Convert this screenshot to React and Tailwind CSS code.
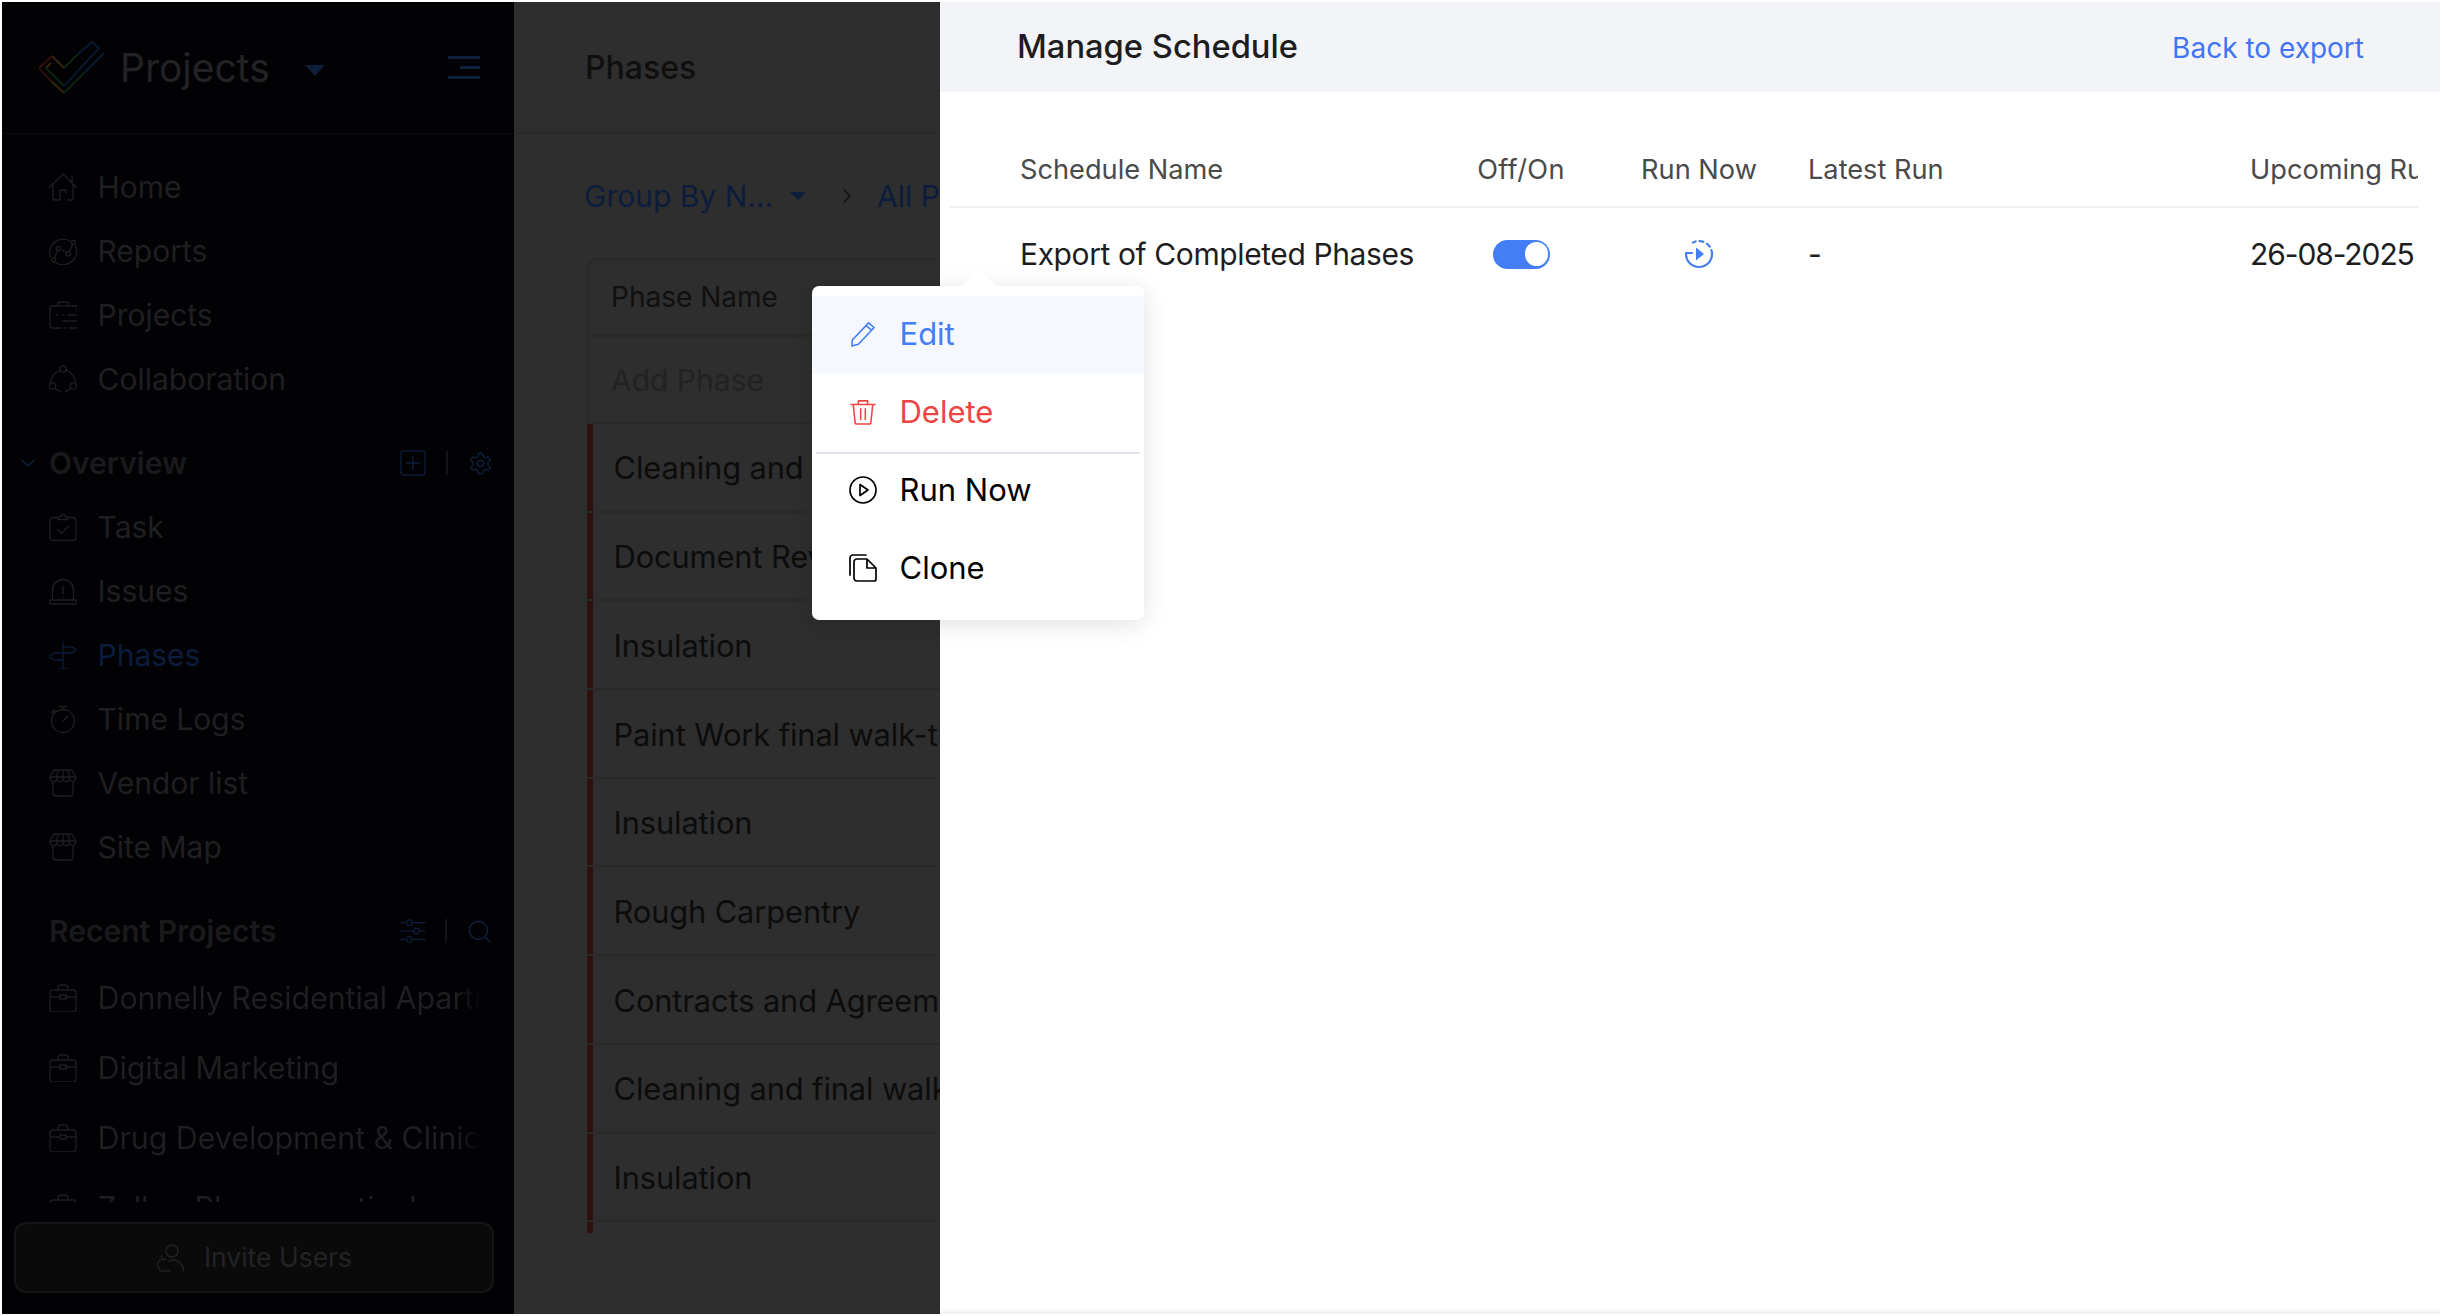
import React from 'react';
import { ChevronDown, ChevronRight, Settings, Search } from 'lucide-react';

const Ico = ({ children, className = 'w-[28px] h-[28px]', sw = 1.3 }) => (
  <svg viewBox="0 0 28 28" fill="none" stroke="currentColor" strokeWidth={sw} strokeLinecap="round" strokeLinejoin="round" className={`shrink-0 ${className}`}>
    {children}
  </svg>
);

const HomeIcon = () => (
  <Ico>
    <path d="M.5 14.5 14 1l13.5 13.5M23 10V3.5M4 11.5v13.5a2 2 0 0 0 2 2h5V17h6v3M24 11.5v13.5a2 2 0 0 1-2 2h-3.5" />
  </Ico>
);
const ReportsIcon = () => (
  <Ico>
    <path d="M22 4.5A13.5 13.5 0 0 0 1.5 20M26.5 9A13.5 13.5 0 0 1 6.5 25.5" />
    <circle cx="24.5" cy="5.5" r="2" />
    <circle cx="19" cy="17" r="2" />
    <circle cx="9.5" cy="11.5" r="2" />
    <circle cx="4.5" cy="23" r="2" />
    <path d="m23.5 7.5-3.5 7.5M17.5 15.5l-6-3M8.5 13.5 5.5 21" />
  </Ico>
);
const ProjectsIcon = () => (
  <Ico>
    <path d="M28 5H3a2 2 0 0 0-2 2v18a2 2 0 0 0 2 2h9M9 5V3a2 2 0 0 1 2-2h7a2 2 0 0 1 2 2v2M14 14h1M19 14h9M14 20h14M15 27h1M20 27h8M9 14H7M28 5v5" />
  </Ico>
);
const CollabIcon = () => (
  <Ico>
    <circle cx="14" cy="4" r="3.2" />
    <circle cx="3.5" cy="21" r="3.2" />
    <circle cx="24.5" cy="21" r="3.2" />
    <path d="M10.5 5.5A12.5 12.5 0 0 0 1.7 17.5M17.5 5.5a12.5 12.5 0 0 1 8.8 12M6.5 23.5a12.5 12.5 0 0 0 5 3M21.5 23.5a12.5 12.5 0 0 1-5 3" />
  </Ico>
);
const TaskIcon = () => (
  <Ico>
    <path d="M9 4.5H4a3 3 0 0 0-3 3v17a3 3 0 0 0 3 3h20a3 3 0 0 0 3-3v-17a3 3 0 0 0-3-3h-5" />
    <path d="M9 6.5V4h2.5a2.5 2.5 0 0 1 5 0H19v2.5zM8.5 16.5l4 4 7-7.5" />
  </Ico>
);
const IssuesIcon = () => (
  <Ico>
    <path d="M3.5 23V13a10.500 10.500 0 0 1 21 0v10M1 23h26v4H1zM14 9v8M14 20.500v.2" />
  </Ico>
);
const PhasesIcon = () => (
  <Ico>
    <path d="M14 1v27M9.500 28h9M14 6h9l5 3-5 3h-9M14 12H5l-5 3.500L5 19h9" />
  </Ico>
);
const TimeIcon = () => (
  <Ico>
    <circle cx="14" cy="16" r="11.500" />
    <path d="M10 1.500h8M14 1.500v3M4.500 5.500l-2 2M4.500 5.500v2.500M4.500 5.500h2.500M19 11l-5 5" />
  </Ico>
);
const StoreIcon = () => (
  <Ico>
    <path d="M5 1h18l4 7v1a3.500 3.500 0 0 1-6.500 1.800A3.800 3.800 0 0 1 14 10.800a3.800 3.800 0 0 1-6.500 0A3.500 3.500 0 0 1 1 9V8zM1 8h26M9 1 7.500 8v3M14 1v10M19 1l1.500 7v3M4 13v11a3 3 0 0 0 3 3h14a3 3 0 0 0 3-3V13" />
  </Ico>
);
const CaseIcon = () => (
  <Ico>
    <path d="M4 6h20a3 3 0 0 1 3 3v16a3 3 0 0 1-3 3H4a3 3 0 0 1-3-3V9a3 3 0 0 1 3-3zM9 6V4a3 3 0 0 1 3-3h4a3 3 0 0 1 3 3v2M1 13h10M17 13h10M11 11h6v4h-6z" />
  </Ico>
);
const InviteIcon = () => (
  <Ico>
    <circle cx="16" cy="7" r="6" />
    <path d="M27.500 27c0-6-4.500-11-10.500-11-2 0-3.500.5-5 1.500M4 25.500a6 6 0 0 1 2-10.500M6 11.500v4h4M4 27h10" />
  </Ico>
);

const Logo = () => (
  <svg viewBox="0 0 66 54" fill="none" strokeWidth="1.8" className="w-[66px] h-[54px] shrink-0">
    <path d="M13 15 0 27l12 13" stroke="#33100c" />
    <path d="M13 15l12 12M12 40l13 12M7 27l5-5" stroke="#382708" />
    <path d="M7 27l18 18M25 27l14-14M25 52l21-21" stroke="#0c2511" />
    <path d="M39 13 53 1l7 6-35 38M46 31 65 12" stroke="#0b1a34" />
  </svg>
);

const topNav = [
  { label: 'Home', icon: HomeIcon },
  { label: 'Reports', icon: ReportsIcon },
  { label: 'Projects', icon: ProjectsIcon },
  { label: 'Collaboration', icon: CollabIcon },
];
const overviewNav = [
  { label: 'Task', icon: TaskIcon },
  { label: 'Issues', icon: IssuesIcon },
  { label: 'Phases', icon: PhasesIcon, active: true },
  { label: 'Time Logs', icon: TimeIcon },
  { label: 'Vendor list', icon: StoreIcon },
  { label: 'Site Map', icon: StoreIcon },
];
const recent = ['Donnelly Residential Apartments', 'Digital Marketing', 'Drug Development & Clinical Trials', 'Zylker Pharmaceuticals'];
const phases = [
  'Cleaning and final walk-through',
  'Document Review',
  'Insulation',
  'Paint Work final walk-through',
  'Insulation',
  'Rough Carpentry',
  'Contracts and Agreements',
  'Cleaning and final walk-through',
  'Insulation',
];

const NavRow = ({ item }) => {
  const Icon = item.icon;
  return (
    <div className={`h-[64px] flex items-center gap-[20.5px] pl-[47px] text-[30px] ${item.active ? 'text-[#0c1c3c]' : 'text-[#1f1f21]'}`}>
      <Icon />
      <span>{item.label}</span>
    </div>
  );
};

const Sidebar = () => (
  <aside className="w-[512px] shrink-0 h-full bg-[#020204] flex flex-col">
    <div className="h-[132px] shrink-0 border-b border-[#0b0b0d] flex items-center pl-[37px] pr-[34px]">
      <Logo />
      <span className="ml-[15px] pt-[2px] text-[39px] text-[#232325]">Projects</span>
      <span className="ml-[35px] mt-[6px] w-0 h-0 border-x-[10px] border-x-transparent border-t-[11px] border-t-[#0e1f3b]" />
      <div className="ml-auto w-[32px] flex flex-col items-end gap-[7px]">
        <span className="h-[3px] w-full bg-[#0e1f3b]" />
        <span className="h-[3px] w-[20px] bg-[#0e1f3b]" />
        <span className="h-[3px] w-full bg-[#0e1f3b]" />
      </div>
    </div>

    <nav className="pt-[21px]">
      {topNav.map((item) => <NavRow key={item.label} item={item} />)}
    </nav>

    {/* Overview */}
    <div className="mt-[20px] h-[64px] flex items-center pl-[14px] pr-[21px]">
      <ChevronDown className="w-[24px] h-[24px] text-[#0e1f3b]" strokeWidth={1.5} />
      <span className="ml-[9px] text-[30px] font-semibold text-[#1a1a1c]">Overview</span>
      <div className="ml-auto flex items-center text-[#0e1f3b]">
        <Ico className="w-[26px] h-[26px]" sw={1.4}>
          <rect x="1" y="1" width="26" height="26" rx="3" />
          <path d="M14 7v14M7 14h14" />
        </Ico>
        <span className="mx-[20px] w-[2px] h-[24px] bg-[#141416]" />
        <Settings className="w-[25px] h-[25px]" strokeWidth={1.4} />
      </div>
    </div>
    {overviewNav.map((item) => <NavRow key={item.label} item={item} />)}

    {/* Recent */}
    <div className="mt-[20px] h-[64px] flex items-center pl-[47px] pr-[21px]">
      <span className="text-[30px] font-semibold text-[#1a1a1c]">Recent Projects</span>
      <div className="ml-auto flex items-center text-[#0e1f3b]">
        <Ico className="w-[26px] h-[26px]" sw={1.3}>
          <path d="M1 5h6M13 5h14M1 14h14M21 14h6M1 23h6M13 23h14" />
          <circle cx="10" cy="5" r="3" />
          <circle cx="18" cy="14" r="3" />
          <circle cx="10" cy="23" r="3" />
        </Ico>
        <span className="mx-[19px] w-[2px] h-[24px] bg-[#141416]" />
        <Search className="w-[27px] h-[27px]" strokeWidth={1.4} />
      </div>
    </div>
    <div className="h-[239px] overflow-hidden shrink-0">
      {recent.map((name) => (
        <div key={name} className="h-[70px] flex items-center gap-[20.5px] pl-[47px] text-[30.5px] text-[#1f1f21]">
          <CaseIcon />
          <span className="w-[385px] overflow-hidden whitespace-nowrap tracking-[-0.1px] [mask-image:linear-gradient(to_right,black_93%,transparent)]">{name}</span>
        </div>
      ))}
    </div>

    <button className="mt-[20px] ml-[12px] w-[480px] h-[71px] shrink-0 rounded-[12px] bg-[#0a0a0b] border-2 border-[#151517] flex items-center justify-center gap-[20px] text-[26.5px] text-[#232325]">
      <InviteIcon />
      <span className="pt-[1px]">Invite Users</span>
    </button>
  </aside>
);

const PhasesPanel = () => (
  <main className="w-[426px] shrink-0 h-full bg-[#2e2e2e] overflow-hidden">
    <div className="h-[132px] border-b-2 border-[#292929] flex items-center pl-[71px] pt-[2px] text-[32px] font-medium text-[#0f0f0f]">
      Phases
    </div>
    <div className="h-[124px] pt-[26px] pl-[70px] flex items-start whitespace-nowrap text-[#0c1c3c]">
      <div className="h-[72px] flex items-center text-[30px]">
        <span className="w-[186px]">Group By N...</span>
        <span className="ml-[20px] w-0 h-0 border-x-[8px] border-x-transparent border-t-[8px] border-t-[#0c1c3c]" />
        <ChevronRight className="ml-[29px] w-[24px] h-[24px] text-[#111]" strokeWidth={1.5} />
        <span className="ml-[18px]">All Phases</span>
      </div>
    </div>
    <div className="ml-[73px] w-[600px] rounded-tl-[10px] border-t-2 border-l-2 border-[#292929]">
      <div className="h-[77px] border-b-[3px] border-[#292929] flex items-center pl-[22px] text-[28px] leading-none text-[#101010]">
        Phase Name
      </div>
      <div className="h-[87px] border-b-2 border-[#292929] flex items-center pl-[22px] text-[30px] leading-none text-[#222224]">
        Add Phase
      </div>
    </div>
    <div className="ml-[73px] w-[600px]">
      {phases.map((name, i) => (
        <div key={i} className="h-[88.7px] flex border-b-2 border-[#292929]">
          <span className="w-[6px] bg-[#2e100e]" />
          <span className="pl-[20.5px] pt-[3px] self-center text-[30.8px] leading-none tracking-[-0.1px] text-[#0c0c0c] whitespace-nowrap">{name}</span>
        </div>
      ))}
      <div className="h-[11px] w-[6px] bg-[#2e100e]" />
    </div>
  </main>
);

const RunIcon = () => (
  <svg viewBox="0 0 30 30" fill="none" stroke="#437ef7" strokeWidth="2.2" strokeLinecap="round" className="w-[30px] h-[30px]">
    <path d="M2 15a13 13 0 1 0 26 0" />
    <path d="M28 15A13 13 0 0 0 9 3.500" strokeDasharray="4 3.800" />
    <path d="M2 14h6" />
    <path d="M12 8.500l8 6.500-8 6.500z" fill="#437ef7" stroke="none" />
  </svg>
);

const SchedulePanel = () => (
  <section className="flex-1 h-full bg-white flex flex-col shadow-[inset_0_-7px_7px_-6px_rgba(0,0,0,0.1)]">
    <header className="h-[90px] shrink-0 bg-[#f2f4f7] flex items-center justify-between pl-[77px] pr-[76px]">
      <h1 className="text-[32.7px] font-medium text-[#1d1d1f]">Manage Schedule</h1>
      <a className="pt-[2px] text-[28px] text-[#4274f5]">Back to export</a>
    </header>
    <div className="mt-[40px] ml-[10px] w-[1468px] overflow-hidden">
      <div className="grid grid-cols-[500px_142px_214px_444px_168px] h-[76px] border-b-2 border-[#f0f0f0] items-center pt-[2px] text-[27.2px] text-[#4a4a4a] whitespace-nowrap">
        <span className="pl-[70px]">Schedule Name</span>
        <span className="text-center tracking-[0.3px]">Off/On</span>
        <span className="text-center">Run Now</span>
        <span className="pl-[2px]">Latest Run</span>
        <span className="overflow-hidden">Upcoming Run</span>
      </div>
      <div className="grid grid-cols-[500px_142px_214px_444px_168px] h-[92px] items-center text-[30px] text-[#1d1d1f] whitespace-nowrap">
        <span className="pl-[70px] tracking-[-0.4px]">Export of Completed Phases</span>
        <span className="flex justify-center">
          <span className="w-[57px] h-[29px] rounded-full bg-[#437ef7] flex items-center justify-end pr-[2px]">
            <span className="w-[23px] h-[24px] rounded-full bg-white" />
          </span>
        </span>
        <span className="flex justify-center"><RunIcon /></span>
        <span className="pl-[2px]">-</span>
        <span className="tracking-[-1.1px]">26-08-2025</span>
      </div>
    </div>
  </section>
);

const MenuRow = ({ icon, label, className }) => (
  <div className={`h-[78px] flex items-center gap-[22.5px] pl-[37px] text-[31px] ${className}`}>
    <span className="w-[28px] pb-[3px] flex justify-center">{icon}</span>
    <span className="pt-[1px] pb-[2px]">{label}</span>
  </div>
);

const ActionMenu = () => (
  <div className="absolute left-[812px] top-[286px] w-[332px] h-[334px] bg-white rounded-[7px] shadow-[0_4px_24px_rgba(0,0,0,0.12)] pt-[10px]">
    <span className="absolute -top-[12px] left-[155px] w-[24px] h-[24px] rotate-45 bg-white rounded-tl-[3px]" />
    <div className="relative">
      <MenuRow
        label="Edit"
        className="bg-[#f5f8ff] text-[#437ef7]"
        icon={
          <Ico className="w-[26px] h-[28px]" sw={1.7}>
            <path d="M20 2l6 5L9 25l-7 2 .5-6.500zM17.500 5l6 5" />
          </Ico>
        }
      />
      <MenuRow
        label="Delete"
        className="text-[#ef4444]"
        icon={
          <Ico className="w-[26px] h-[28px]" sw={1.7}>
            <path d="M1 6h26M3.500 6l2 19a2 2 0 0 0 2 2h13a2 2 0 0 0 2-2l2-19M9 6V2h10v4M11.500 10.500V22M16.500 10.500V22" />
          </Ico>
        }
      />
      <div className="mx-[4px] h-[2px] -mb-[2px] bg-[#dfe3ee]" />
      <MenuRow
        label="Run Now"
        className="text-black"
        icon={
          <Ico sw={1.7}>
            <circle cx="14" cy="14" r="13" />
            <path d="M11 8.500l8 5.500-8 5.500z" />
          </Ico>
        }
      />
      <MenuRow
        label="Clone"
        className="text-black"
        icon={
          <Ico sw={1.7}>
            <path d="M1 21V4a3 3 0 0 1 3-3h13M8 5h10l9 9v11a2 2 0 0 1-2 2H8a3 3 0 0 1-3-3V8a3 3 0 0 1 3-3zM18 5v9h9" />
          </Ico>
        }
      />
    </div>
  </div>
);

export default function App() {
  return (
    <div className="relative w-[2442px] h-[1316px] bg-white p-[2px] overflow-hidden font-['Inter','Liberation_Sans',sans-serif]">
      <div className="flex h-full w-full">
        <Sidebar />
        <PhasesPanel />
        <SchedulePanel />
      </div>
      <ActionMenu />
    </div>
  );
}
